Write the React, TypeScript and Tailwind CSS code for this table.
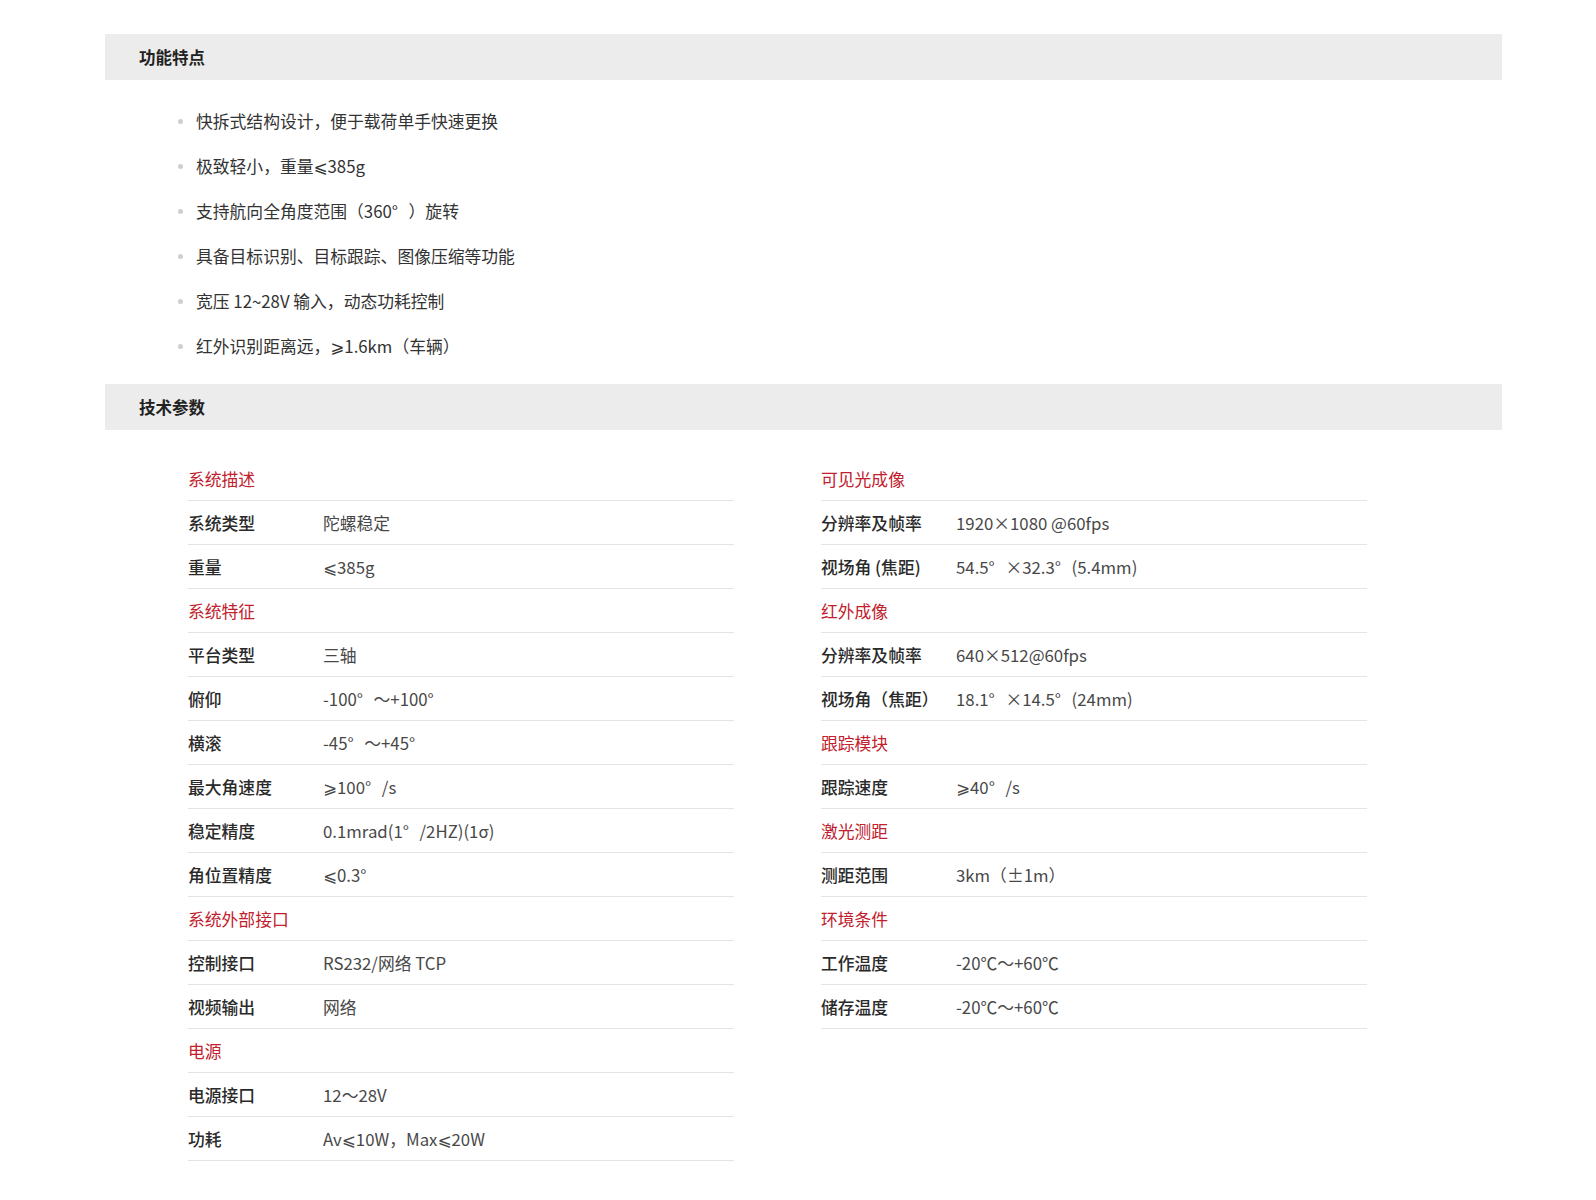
import React from 'react';

type Row = { label: string; value?: string; section?: boolean };

const features = [
	'快拆式结构设计，便于载荷单手快速更换',
	'极致轻小，重量⩽385g',
	'支持航向全角度范围（360°）旋转',
	'具备目标识别、目标跟踪、图像压缩等功能',
	'宽压 12~28V 输入，动态功耗控制',
	'红外识别距离远，⩾1.6km（车辆）',
];

const leftRows: Row[] = [
	{ label: '系统描述', section: true },
	{ label: '系统类型', value: '陀螺稳定' },
	{ label: '重量', value: '⩽385g' },
	{ label: '系统特征', section: true },
	{ label: '平台类型', value: '三轴' },
	{ label: '俯仰', value: '-100°～+100°' },
	{ label: '横滚', value: '-45°～+45°' },
	{ label: '最大角速度', value: '⩾100°/s' },
	{ label: '稳定精度', value: '0.1mrad(1°/2HZ)(1σ)' },
	{ label: '角位置精度', value: '⩽0.3°' },
	{ label: '系统外部接口', section: true },
	{ label: '控制接口', value: 'RS232/网络 TCP' },
	{ label: '视频输出', value: '网络' },
	{ label: '电源', section: true },
	{ label: '电源接口', value: '12～28V' },
	{ label: '功耗', value: 'Av⩽10W，Max⩽20W' },
];

const rightRows: Row[] = [
	{ label: '可见光成像', section: true },
	{ label: '分辨率及帧率', value: '1920×1080 @60fps' },
	{ label: '视场角 (焦距)', value: '54.5°×32.3°(5.4mm)' },
	{ label: '红外成像', section: true },
	{ label: '分辨率及帧率', value: '640×512@60fps' },
	{ label: '视场角（焦距）', value: '18.1°×14.5°(24mm)' },
	{ label: '跟踪模块', section: true },
	{ label: '跟踪速度', value: '⩾40°/s' },
	{ label: '激光测距', section: true },
	{ label: '测距范围', value: '3km（±1m）' },
	{ label: '环境条件', section: true },
	{ label: '工作温度', value: '-20℃～+60℃' },
	{ label: '储存温度', value: '-20℃～+60℃' },
];

// the source page sets degree signs in a full-width cell
const withDegrees = (text: string) =>
	text.split('°').map((part, idx, arr) => (
		<React.Fragment key={idx}>
			{part}
			{idx < arr.length - 1 && <span className="inline-block w-[1em]">°</span>}
		</React.Fragment>
	));

const SectionBar = ({ title }: { title: string }) => (
	<div className="h-[46px] bg-[#ececec] pl-[34px] pt-[1px] flex items-center text-[16.5px] font-bold text-[#222]">
		{title}
	</div>
);

const SpecTable = ({ rows }: { rows: Row[] }) => (
	<div className="w-[546px] flex flex-col">
		{rows.map((row, idx) => (
			<div
				key={idx}
				className="h-[44px] pt-[3px] flex items-center border-b border-[#e4e4e4] text-[16.8px]"
			>
				{row.section ? (
					<span className="text-[#c1202c]">{row.label}</span>
				) : (
					<>
						<span className="w-[135px] shrink-0 font-medium text-[#2a2a2a]">
							{row.label}
						</span>
						<span className="text-[#484848]">{withDegrees(row.value ?? '')}</span>
					</>
				)}
			</div>
		))}
	</div>
);

export default function App() {
	return (
		<div
			className="w-full min-h-[1200px] bg-white"
			style={{ fontFamily: '"Noto Sans CJK SC", "Noto Sans", "DejaVu Sans", sans-serif' }}
		>
			<div className="ml-[105px] w-[1397px] pt-[34px]">
				{/* 功能特点 */}
				<SectionBar title="功能特点" />
				<ul className="pt-[19px] pb-[15px] pl-[73px]">
					{features.map((text, idx) => (
						<li key={idx} className="h-[45px] flex items-center text-[16.8px] text-[#333]">
							<span className="w-[5px] h-[5px] rounded-full bg-[#cfcfcf] mr-[13px]" />
							<span>{withDegrees(text)}</span>
						</li>
					))}
				</ul>

				{/* 技术参数 */}
				<SectionBar title="技术参数" />
				<div className="pt-[27px] pl-[83px] flex gap-[87px] items-start">
					<SpecTable rows={leftRows} />
					<SpecTable rows={rightRows} />
				</div>
			</div>
		</div>
	);
}
